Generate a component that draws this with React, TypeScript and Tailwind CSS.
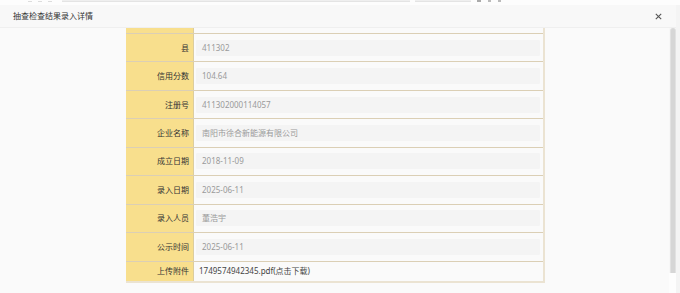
import React from "react";

const rows: { label: string; value: string }[] = [
  { label: "县", value: "411302" },
  { label: "信用分数", value: "104.64" },
  { label: "注册号", value: "411302000114057" },
  { label: "企业名称", value: "南阳市徐合新能源有限公司" },
  { label: "成立日期", value: "2018-11-09" },
  { label: "录入日期", value: "2025-06-11" },
  { label: "录入人员", value: "董浩宇" },
  { label: "公示时间", value: "2025-06-11" },
];

export default function App() {
  return (
    <div
      className="w-[680px] h-[293px] bg-[#f4f4f4] flex flex-col overflow-hidden text-[8px] text-[#333]"
      style={{ fontFamily: '"Noto Sans", "Noto Sans CJK SC", sans-serif' }}
    >
      {/* background page strip */}
      <div className="h-[5px] shrink-0 bg-[#fdfdfd] flex items-start">
        <div className="w-[62px] flex gap-[6px] pl-[28px] pt-[1px]">
          <div className="w-[4px] h-[1px] bg-[#dddddd]" />
          <div className="w-[4px] h-[1px] bg-[#dddddd]" />
          <div className="w-[4px] h-[1px] bg-[#dddddd]" />
        </div>
        <div className="w-[348px] h-[2px] bg-[#efefef] border-b border-[#e4e4e4]" />
        <div className="w-[56px] h-[2px] ml-[5px] bg-[#efefef] border-b border-[#e4e4e4]" />
        <div className="flex gap-[7px] ml-[6px]">
          <div className="w-[4px] h-[2px] bg-[#aaa]" />
          <div className="w-[3px] h-[2px] bg-[#bbb]" />
          <div className="w-[3px] h-[2px] bg-[#bbb]" />
        </div>
      </div>

      {/* dialog */}
      <div className="w-[676px] flex-1 flex flex-col bg-[#fafafa] min-h-0">
        <div className="h-[23px] shrink-0 bg-[#f8f8f8] border-b border-[#efefef] flex items-center justify-between pl-[13px] pr-[14px]">
          <span className="leading-none">抽查检查结果录入详情</span>
          <svg width="7" height="7" viewBox="0 0 7 7">
            <path d="M0.8 0.8 L6.2 6.2 M6.2 0.8 L0.8 6.2" stroke="#555" strokeWidth="1.1" />
          </svg>
        </div>

        <div className="flex-1 flex min-h-0">
          <div className="flex-1 pl-[126px] overflow-hidden">
            <div className="w-[419px] flex flex-col border-r-2 border-b-2 border-[#ebe3d2]">
              {/* partial row clipped at top */}
              <div className="h-[6px] flex border-b border-[#dbcfb5]">
                <div className="w-[68px] bg-[#f8df8d] border-r border-[#dccd9e]" />
                <div className="flex-1" />
              </div>
              {rows.map((r) => (
                <div key={r.label} className="h-[28.45px] flex border-b border-[#dbcfb5]">
                  <div className="w-[68px] bg-[#f8df8d] border-r border-[#dccd9e] flex items-center justify-end pr-[4px]">
                    {r.label}
                  </div>
                  <div className="flex-1 flex items-center pl-[2px] pr-[3px]">
                    <div className="flex-1 h-[16px] bg-[#f4f4f4] rounded-[1px] flex items-center pl-[6px] text-[#9a9a9a]">
                      {r.value}
                    </div>
                  </div>
                </div>
              ))}
              <div className="h-[19px] flex">
                <div className="w-[68px] bg-[#f8df8d] border-r border-[#dccd9e] flex items-center justify-end pr-[4px]">
                  上传附件
                </div>
                <div className="flex-1 flex items-center pl-[5px] text-[#444]">
                  1749574942345.pdf(点击下载)
                </div>
              </div>
            </div>
          </div>

          {/* scrollbar */}
          <div className="w-[7px] shrink-0 flex flex-col bg-[#f7f7f7]">
            <div className="h-[245px] mx-[0.5px] bg-[#d6d6d6] rounded-t-[3px] border-x border-[#e2e2e2]" />
            <div className="flex-1 bg-[#fdfdfd]" />
          </div>
        </div>
      </div>
    </div>
  );
}
